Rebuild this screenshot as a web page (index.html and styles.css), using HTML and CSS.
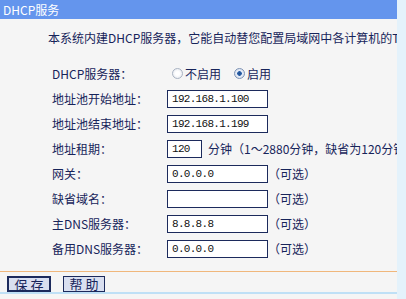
FILE: index.html
```
<!DOCTYPE html>
<html lang="zh-CN">
<head>
    <meta charset="UTF-8">
    <title>DHCP服务</title>
    <link rel="stylesheet" href="styles.css">
</head>
<body>
    <div class="page">
        <div class="main">
            <div class="title">DHCP服务</div>
            <p class="intro">本系统内建DHCP服务器，它能自动替您配置局域网中各计算机的TCP/IP协议。</p>
            <form class="form">
                <label>DHCP服务器：</label>
                <div class="field">
                    <span class="radio"></span><span class="opt">不启用</span>
                    <span class="radio on"></span><span class="opt">启用</span>
                </div>

                <label>地址池开始地址：</label>
                <div class="field"><input type="text" class="ip" value="192.168.1.100"></div>

                <label>地址池结束地址：</label>
                <div class="field"><input type="text" class="ip" value="192.168.1.199"></div>

                <label>地址租期：</label>
                <div class="field"><input type="text" class="ip short" value="120"><span class="note lease">分钟（1～2880分钟，缺省为120分钟）</span></div>

                <label>网关：</label>
                <div class="field"><input type="text" class="ip" value="0.0.0.0"><span class="note">（可选）</span></div>

                <label>缺省域名：</label>
                <div class="field"><input type="text" class="ip" value=""><span class="note">（可选）</span></div>

                <label>主DNS服务器：</label>
                <div class="field"><input type="text" class="ip" value="8.8.8.8"><span class="note">（可选）</span></div>

                <label>备用DNS服务器：</label>
                <div class="field"><input type="text" class="ip" value="0.0.0.0"><span class="note">（可选）</span></div>
            </form>
            <div class="footer">
                <button type="button" class="btn save">保 存</button>
                <button type="button" class="btn">帮 助</button>
            </div>
        </div>
        <div class="side"></div>
    </div>
</body>
</html>
```

FILE: styles.css
```
body {
    margin: 0;
    padding: 0;
    background-color: #ffffff;
    font-family: "Noto Sans CJK SC", "DejaVu Sans", sans-serif;
    font-size: 12px;
    color: #17245a;
}

.page {
    display: flex;
    height: 299px;
    overflow: hidden;
}

.main {
    width: 397px;
    flex-shrink: 0;
    background-color: #f5f5f5;
    overflow: hidden;
    white-space: nowrap;
    display: flex;
    flex-direction: column;
}

.side {
    flex: 1;
    background-color: #e4f2fb;
}

.title {
    height: 19px;
    line-height: 19px;
    padding-left: 3px;
    background-color: #6495ed;
    color: #ffffff;
}

.intro {
    margin: 11px 0 0 48px;
    line-height: 16px;
}

.form {
    display: grid;
    grid-template-columns: 115px auto;
    grid-auto-rows: 25px;
    align-items: center;
    margin: 15px 0 0 52px;
}

.field {
    display: flex;
    align-items: center;
}

.radio {
    width: 9px;
    height: 9px;
    border: 1px solid #a9b3c2;
    border-radius: 50%;
    background: radial-gradient(circle, #ffffff 30%, #dfe3ea 100%);
    margin: 0 2px 0 5px;
}

.radio.on {
    border-color: #7d92b4;
    background: radial-gradient(circle, #1f4f8f 0, #2a5fa8 32%, #e8eef8 40%, #cfd8e6 100%);
    margin-left: 13px;
}

.opt {
    color: #17245a;
}

.ip {
    box-sizing: border-box;
    width: 101px;
    height: 18px;
    margin: 0;
    padding: 0 0 0 4px;
    border: 1px solid #1c2a5c;
    background-color: #ffffff;
    font-family: "Liberation Mono", monospace;
    font-size: 11px;
    letter-spacing: -0.7px;
    color: #111111;
}

.ip.short {
    width: 35px;
}

.note {
    margin-left: 0;
}

.note.lease {
    margin-left: 6px;
}

.footer {
    margin-top: 10px;
    height: 20px;
    border-top: 1px solid #f0b77c;
    border-bottom: 2px solid #bfe0f6;
    display: flex;
    align-items: flex-end;
    gap: 12px;
    padding-left: 7px;
}

.btn {
    height: 16px;
    padding: 0;
    background-color: #d9dff0;
    border: 1px solid #1c2a5c;
    font-family: "Noto Sans CJK SC", sans-serif;
    font-size: 13px;
    line-height: 14px;
    color: #17245a;
    width: 42px;
}

.btn.save {
    width: 44px;
    border-width: 2px;
}
```
